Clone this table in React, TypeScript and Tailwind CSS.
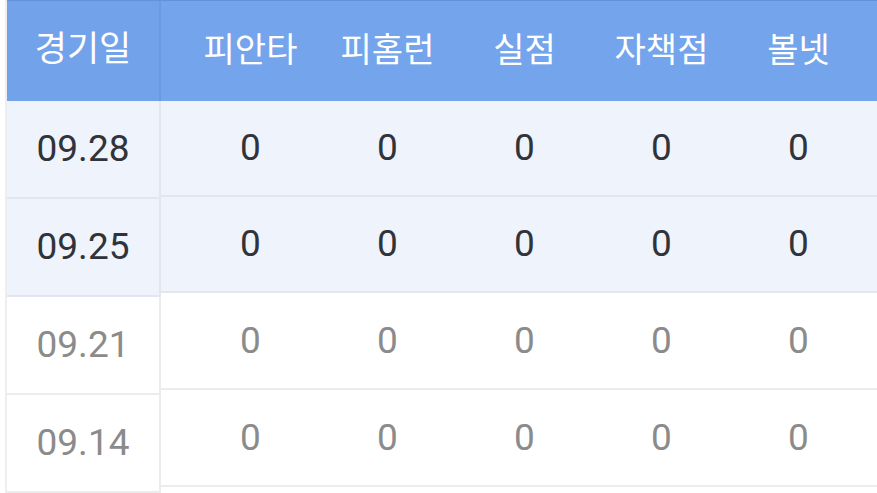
const columns = ["피안타", "피홈런", "실점", "자책점", "볼넷"];

const rows = [
  { date: "09.28", values: [0, 0, 0, 0, 0], highlight: true },
  { date: "09.25", values: [0, 0, 0, 0, 0], highlight: true },
  { date: "09.21", values: [0, 0, 0, 0, 0], highlight: false },
  { date: "09.14", values: [0, 0, 0, 0, 0], highlight: false },
];

function App() {
  return (
    <div
      className="w-[877px] h-[493px] overflow-hidden bg-white flex"
      style={{ fontFamily: "Roboto, 'Noto Sans CJK KR', sans-serif" }}
    >
      {/* fixed date column */}
      <div className="ml-[5px] w-[156px] flex flex-col border-l-2 border-[#eceef2] shrink-0">
        <div className="h-[101px] bg-[#72a2ea] border-t border-[#6490d8] border-r-2 border-r-[#6a9ae2] flex items-center justify-center text-white text-[35px] pb-[2px]">
          경기일
        </div>
        {rows.map((row) => (
          <div
            key={row.date}
            className={
              row.highlight
                ? "h-[98px] shrink-0 bg-[#eff3fc] border-b-2 border-r-2 border-[#e1e6ef] flex items-center justify-center text-[37px] text-[#30343a]"
                : "h-[98px] shrink-0 bg-white border-b-2 border-r-2 border-[#ececec] flex items-center justify-center text-[37px] text-[#8b8b8b]"
            }
          >
            {row.date}
          </div>
        ))}
      </div>

      {/* stat columns */}
      <div className="flex-1 flex flex-col">
        <div className="h-[101px] shrink-0 bg-[#74a4eb] border-t border-[#6490d8] flex pl-[21px] text-white text-[34px]">
          {columns.map((c) => (
            <div key={c} className="w-[137px] flex items-center justify-center pb-[2px]">
              {c}
            </div>
          ))}
        </div>
        {rows.map((row) => (
          <div
            key={row.date}
            className={
              row.highlight
                ? "h-[96px] shrink-0 bg-[#eff3fc] border-b-2 border-[#e1e6ef] flex pl-[21px] text-[37px] text-[#30343a]"
                : "h-[97px] shrink-0 bg-white border-b-2 border-[#ececec] flex pl-[21px] text-[37px] text-[#8b8b8b]"
            }
          >
            {row.values.map((v, i) => (
              <div key={i} className="w-[137px] flex items-center justify-center">
                {v}
              </div>
            ))}
          </div>
        ))}
      </div>
    </div>
  );
}

export default App;
